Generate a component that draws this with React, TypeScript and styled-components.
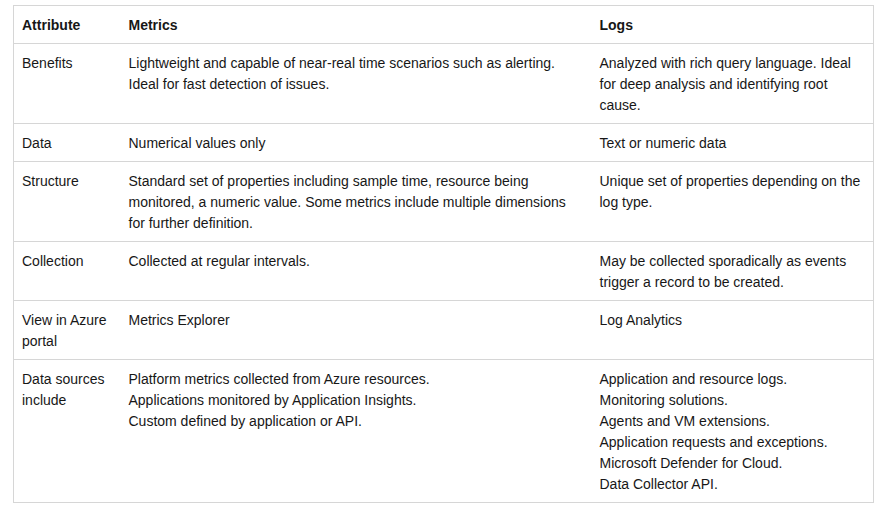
import { createGlobalStyle } from 'styled-components';
import styled from 'styled-components';

const GlobalStyle = createGlobalStyle`
  html, body {
    margin: 0;
    padding: 0;
    background: #ffffff;
  }
  body {
    font-family: 'Segoe UI', 'Liberation Sans', Arial, sans-serif;
    color: #171717;
  }
`;

const Page = styled.div`
  padding: 5px 0 0 13px;
`;

const Table = styled.table`
  width: 860px;
  table-layout: fixed;
  border-collapse: collapse;
  border: 1px solid #d6d6d6;
  font-size: 14px;
  line-height: 21px;
`;

const Row = styled.tr`
  border-top: 1px solid #d6d6d6;
`;

const HeadCell = styled.th<{ $w: number }>`
  box-sizing: border-box;
  width: ${(p) => p.$w}px;
  text-align: left;
  font-weight: 700;
  padding: 9px 8px 7px;
  vertical-align: top;
`;

const Cell = styled.td`
  padding: 9px 8px 7px;
  vertical-align: top;
  text-align: left;
`;

const Line = styled.span`
  display: block;
  white-space: nowrap;
`;

type RowData = { attr: string[]; metrics: string[]; logs: string[] };

const rows: RowData[] = [
  {
    attr: ['Benefits'],
    metrics: [
      'Lightweight and capable of near-real time scenarios such as alerting.',
      'Ideal for fast detection of issues.',
    ],
    logs: ['Analyzed with rich query language. Ideal', 'for deep analysis and identifying root', 'cause.'],
  },
  { attr: ['Data'], metrics: ['Numerical values only'], logs: ['Text or numeric data'] },
  {
    attr: ['Structure'],
    metrics: [
      'Standard set of properties including sample time, resource being',
      'monitored, a numeric value. Some metrics include multiple dimensions',
      'for further definition.',
    ],
    logs: ['Unique set of properties depending on the', 'log type.'],
  },
  {
    attr: ['Collection'],
    metrics: ['Collected at regular intervals.'],
    logs: ['May be collected sporadically as events', 'trigger a record to be created.'],
  },
  { attr: ['View in Azure', 'portal'], metrics: ['Metrics Explorer'], logs: ['Log Analytics'] },
  {
    attr: ['Data sources', 'include'],
    metrics: [
      'Platform metrics collected from Azure resources.',
      'Applications monitored by Application Insights.',
      'Custom defined by application or API.',
    ],
    logs: [
      'Application and resource logs.',
      'Monitoring solutions.',
      'Agents and VM extensions.',
      'Application requests and exceptions.',
      'Microsoft Defender for Cloud.',
      'Data Collector API.',
    ],
  },
];

const Lines = ({ items }: { items: string[] }) => (
  <>
    {items.map((t) => (
      <Line key={t}>{t}</Line>
    ))}
  </>
);

export default function App() {
  return (
    <Page>
      <GlobalStyle />
      <Table>
        <thead>
          <tr>
            <HeadCell $w={107}>Attribute</HeadCell>
            <HeadCell $w={471}>Metrics</HeadCell>
            <HeadCell $w={282}>Logs</HeadCell>
          </tr>
        </thead>
        <tbody>
          {rows.map((r) => (
            <Row key={r.attr.join(' ')}>
              <Cell>
                <Lines items={r.attr} />
              </Cell>
              <Cell>
                <Lines items={r.metrics} />
              </Cell>
              <Cell>
                <Lines items={r.logs} />
              </Cell>
            </Row>
          ))}
        </tbody>
      </Table>
    </Page>
  );
}
